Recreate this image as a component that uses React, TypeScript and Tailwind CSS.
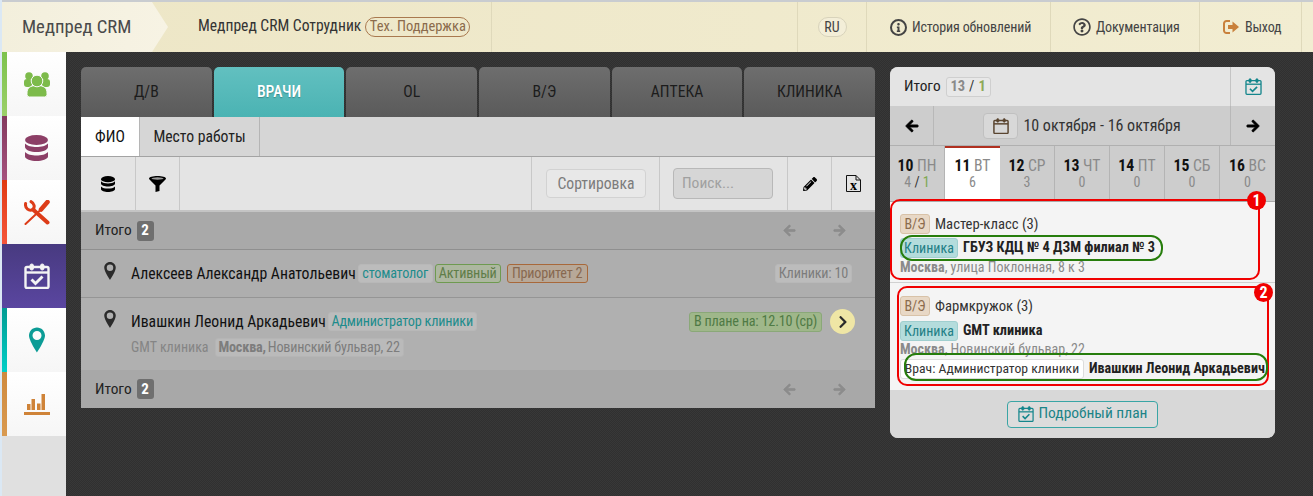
import React from "react";
import { FaPencilAlt, FaArrowLeft, FaArrowRight, FaRegQuestionCircle, FaInfo, FaChevronRight } from "react-icons/fa";

const font = "font-['Roboto_Condensed','Liberation_Sans_Narrow',Roboto,sans-serif] [font-stretch:condensed]";

function UsersIcon() {
  return (
    <svg width="26" height="25" viewBox="0 0 26 25" className="text-[#7dbb4b]" fill="currentColor">
      <circle cx="5" cy="4" r="3.800" />
      <circle cx="21" cy="4" r="3.800" />
      <rect x="0" y="7" width="8" height="8" rx="3" />
      <rect x="18" y="7" width="8" height="8" rx="3" />
      <path d="M3 21c0-5 3-7.500 10-7.500S23 16 23 21v1.500a2.500 2.500 0 0 1-2.500 2.500h-15A2.500 2.500 0 0 1 3 22.500Z" stroke="#f8f8f8" strokeWidth="1" />
      <circle cx="13" cy="9" r="5.800" stroke="#f8f8f8" strokeWidth="1" />
    </svg>
  );
}

function DbIcon({ className, w, h }: { className: string; w: number; h: number }) {
  return (
    <svg width={w} height={h} viewBox="0 0 23 26" fill="currentColor" className={className}>
      <ellipse cx="11.500" cy="5" rx="11.500" ry="5" />
      <path d="M0 8.500C2 11 7 12 11.500 12S21 11 23 8.500V12C23 15 17 17 11.500 17S0 15 0 12Z" />
      <path d="M0 17C2 19.500 7 20.500 11.500 20.500S21 19.500 23 17v4.500C23 24 17 26 11.500 26S0 24 0 21.500Z" />
    </svg>
  );
}

function ToolsIcon() {
  return (
    <svg width="26" height="25" viewBox="0 0 26 25" fill="none" stroke="#dd3c18" strokeLinecap="round">
      <path d="M1.600 3.500C.8 8.500 5 11.500 9 9.500C11 7 10.500 3.500 7 1.600" strokeWidth="3" />
      <path d="M9 9.500L23.500 22.500" strokeWidth="4" />
      <path d="M23.500 2L17 9.500" strokeWidth="4.500" />
      <path d="M17 9.500L1.500 24" strokeWidth="2" />
    </svg>
  );
}

function CalIcon({ size, className, check = true, sw = 2 }: { size: number; className: string; check?: boolean; sw?: number }) {
  return (
    <svg width={size} height={size} viewBox="0 0 26 26" fill="none" stroke="currentColor" strokeWidth={sw} className={className}>
      <rect x="1.500" y="4" width="23" height="21" rx="1.500" />
      <path d="M1.500 9.500H24.500" />
      <rect x="6" y="1" width="3.500" height="6" rx="1.700" fill="currentColor" strokeWidth="1" />
      <rect x="16.500" y="1" width="3.500" height="6" rx="1.700" fill="currentColor" strokeWidth="1" />
      {check && <path d="M7.500 16.500L11.500 20.500L18.500 13.500" strokeWidth={sw + 0.5} />}
    </svg>
  );
}

function PinIcon({ w, h, color }: { w: number; h: number; color: string }) {
  return (
    <svg width={w} height={h} viewBox="0 0 16 25" className={color} fill="currentColor">
      <path fillRule="evenodd" d="M8 0C3.600 0 0 3.600 0 8C0 13 8 25 8 25S16 13 16 8C16 3.600 12.400 0 8 0ZM8 3.500a4.500 4.500 0 1 1 0 9a4.500 4.500 0 0 1 0-9Z" />
    </svg>
  );
}

function ChartIcon() {
  return (
    <svg width="26" height="21" viewBox="0 0 26 21" fill="#cf8338">
      <rect x="3" y="10" width="3.500" height="6" />
      <rect x="7.500" y="5" width="3.500" height="11" />
      <rect x="13" y="9.500" width="3.500" height="6.500" />
      <rect x="17.500" y="0" width="3.500" height="16" />
      <rect x="0" y="18" width="26" height="3" />
    </svg>
  );
}

function FunnelIcon() {
  return (
    <svg width="17" height="16" viewBox="0 0 17 16" fill="#000">
      <path d="M0 2.500C0 1 4 0 8.500 0S17 1 17 2.500c0 .6-.4 1-1 1.500L10.500 9.500V15L6.500 16V9.500L1 4C.4 3.500 0 3.100 0 2.500Z" />
      <ellipse cx="8.500" cy="2.500" rx="6" ry="1.200" fill="#9a9a9a" />
    </svg>
  );
}

function ExcelIcon() {
  return (
    <svg width="15" height="17" viewBox="0 0 15 17" fill="none">
      <path d="M.5.500H10L14.500 5V16.500H.5Z M10 .5V5H14.500" stroke="#111" />
      <text x="7.500" y="14.500" textAnchor="middle" fontSize="14" fontWeight="700" fontFamily="'Liberation Serif',serif" fill="#000" stroke="none">x</text>
    </svg>
  );
}

function ExitIcon() {
  return (
    <svg width="16" height="16" viewBox="0 0 16 16" fill="none" className="text-[#c9813c]">
      <path d="M7 2H3.500A2.500 2.500 0 0 0 1 4.500V11.500A2.500 2.500 0 0 0 3.500 14H7" stroke="currentColor" strokeWidth="2" />
      <path d="M5 6H9.500V2.500L16 8L9.500 13.500V10H5Z" fill="currentColor" />
    </svg>
  );
}

function NavItem({ border, bg, children }: { border: string; bg: string; children: React.ReactNode }) {
  return (
    <div className={`h-16 flex ${bg}`}>
      <div className={`w-[5px] bg-gradient-to-b ${border}`} />
      <div className="flex-1 flex items-center justify-center">{children}</div>
    </div>
  );
}

function Pill({ className = "", size = "text-[14.200px] tracking-[-0.2px]", children }: { className?: string; size?: string; children: React.ReactNode }) {
  return <span className={`inline-flex items-center px-1 rounded-[3px] border leading-none whitespace-nowrap ${size} ${className}`}>{children}</span>;
}

function Pager() {
  return (
    <div className="ml-auto flex items-center gap-[37px] pr-[29px] text-[#8c8c8c] text-[13px]">
      <FaArrowLeft className="stroke-current stroke-[25]" /><FaArrowRight className="stroke-current stroke-[25]" />
    </div>
  );
}

function Total({ bar }: { bar: string }) {
  return (
    <div className={`h-[38px] flex items-center pl-[14px] ${bar}`}>
      <span className="text-[15.300px] text-[#222]">Итого</span>
      <span className="ml-[5px] w-[17px] h-5 rounded-[3px] bg-[#6f6f6f] text-white text-[15px] font-bold flex items-center justify-center">2</span>
      <Pager />
    </div>
  );
}

const days = [
  ["10", "ПН", "4"], ["11", "ВТ", "6"], ["12", "СР", "3"], ["13", "ЧТ", "0"], ["14", "ПТ", "0"], ["15", "СБ", "0"], ["16", "ВС", "0"],
];

const light = "bg-gradient-to-b from-white to-[#f6f6f6]";
const plain = "text-[14px]";

export default function App() {
  return (
    <div className={`${font} w-[1313px] h-[496px] overflow-hidden flex flex-col border-l-2 border-[#dbe8f4] bg-[#343434] text-[#222]`}>
      <header className="h-[52px] shrink-0 flex border-t-2 border-[#c9ccd0] bg-gradient-to-r from-[#ede6c6] to-[#f2edd2]">
        <div className="w-[166px] flex items-center pl-5 bg-gradient-to-r from-[#f3efdc] to-[#f7f3e4] text-[18.700px] text-[#4a4a4a] [clip-path:polygon(0_0,150px_0,100%_50%,150px_100%,0_100%)]">Медпред CRM</div>
        <div className="flex items-center ml-[30px] w-[293px] text-[15.600px] text-[#333]">
          Медпред CRM Сотрудник
          <span className="ml-1 h-5 w-[105px] flex items-center justify-center rounded-full border border-[#a9794f] text-[#8b6b4c] text-[14.500px]">Тех. Поддержка</span>
        </div>
        <div className="flex-1 border-l border-[#dfd9bb]" />
        <div className="w-[69px] flex items-center justify-center border-l border-[#dfd9bb]">
          <span className="h-5 w-[29px] flex items-center justify-center rounded-full border border-[#d8d3bb] bg-[#f3eed8] text-[14px] text-[#444]">RU</span>
        </div>
        <div className="w-[184px] flex items-center pl-[23px] border-l border-[#dfd9bb] text-[14px] tracking-[-0.15px] text-[#444] gap-[5px] whitespace-nowrap">
          <span className="w-[17px] h-[17px] rounded-full border-2 border-[#444] flex items-center justify-center text-[9px]"><FaInfo /></span>История обновлений
        </div>
        <div className="w-[149px] flex items-center pl-[22px] border-l border-[#dfd9bb] text-[14px] tracking-[-0.15px] text-[#444] gap-[5px]">
          <FaRegQuestionCircle className="text-[18px]" />Документация
        </div>
        <div className="w-[102px] flex items-center pl-[23px] border-l border-[#dfd9bb] text-[14px] tracking-[-0.15px] text-[#444] gap-[6px]">
          <ExitIcon />Выход
        </div>
        <div className="w-[12px] border-l border-[#dfd9bb]" />
      </header>
      <div className="flex-1 flex min-h-0 bg-[conic-gradient(#303030_25%,#383838_0_50%,#303030_0_75%,#383838_0)] bg-[length:2px_2px]">
        <aside className="w-[64px] shrink-0 bg-[#e0e0e0]">
          <NavItem border="from-[#7cc24c] to-[#9bd06a]" bg={light}><UsersIcon /></NavItem>
          <NavItem border="from-[#833a5f] to-[#a5527e]" bg={light}><DbIcon w={23} h={26} className="text-[#8c3f66]" /></NavItem>
          <NavItem border="from-[#e03a10] to-[#f5553a]" bg={light}><ToolsIcon /></NavItem>
          <NavItem border="from-[#483a80] to-[#5a46a0]" bg="bg-gradient-to-b from-[#483a80] to-[#5a46a0]"><CalIcon size={26} sw={2.400} className="text-[#f4f4f4]" /></NavItem>
          <NavItem border="from-[#009b93] to-[#00cfc7]" bg={light}><PinIcon w={16} h={26} color="text-[#0c9c96]" /></NavItem>
          <NavItem border="from-[#cf8a3e] to-[#d99a50]" bg={light}><ChartIcon /></NavItem>
        </aside>
        <main className="flex-1 flex gap-[15px] pl-[15px] pt-[15px] items-start">
          <section className="w-[794px]">
            <div className="grid grid-cols-6 gap-[2px] h-[50px]">
              {["Д/В", "ВРАЧИ", "OL", "В/Э", "АПТЕКА", "КЛИНИКА"].map((t) => (
                <div key={t} className={t === "ВРАЧИ"
                  ? "rounded-t-[5px] flex items-center justify-center text-[15.700px] font-medium text-white [text-shadow:0_1px_1px_#3a8a8a] bg-gradient-to-b from-[#62c0c0] to-[#4ab3b3]"
                  : "rounded-t-[5px] flex items-center justify-center text-[15.700px] text-[#1c1c1c] bg-gradient-to-b from-[#6e6e6e] to-[#5a5a5a]"}>{t}</div>
              ))}
            </div>
            <div className="h-10 flex bg-[#d6d6d6] border-b border-[#a3a3a3] text-[15.700px]">
              <div className="w-[58px] bg-white flex items-center justify-center text-[#111]">ФИО</div>
              <div className="w-[121px] flex items-center justify-center border-l border-r border-[#b5b5b5] text-[#222]">Место работы</div>
            </div>
            <div className="h-[55px] flex bg-[#e4e4e4] border-b-2 border-[#c4c4c4]">
              <div className="w-[55px] flex items-center justify-center border-r border-[#c8c8c8]"><DbIcon w={14} h={16} className="text-black" /></div>
              <div className="w-[44px] flex items-center justify-center border-r border-[#c8c8c8]"><FunnelIcon /></div>
              <div className="flex-1 border-r border-[#c8c8c8]" />
              <div className="w-[128px] flex items-center pl-[14px] border-r border-[#c8c8c8]">
                <span className="w-[100px] h-[29px] rounded-[4px] border border-[#d2d2d2] bg-[#e8e8e8] flex items-center justify-center text-[15.700px] text-[#7c7c7c]">Сортировка</span>
              </div>
              <div className="w-[128px] flex items-center pl-[13px] border-r border-[#c8c8c8]">
                <span className="w-[100px] h-[31px] rounded-[4px] border border-[#b8b8b8] bg-[#d6d6d6] flex items-center pl-2 text-[15.500px] text-[#a0a0a0]">Поиск...</span>
              </div>
              <div className="w-[44px] flex items-center justify-center border-r border-[#c8c8c8] text-[14px] text-black"><FaPencilAlt /></div>
              <div className="w-[43px] flex items-center justify-center"><ExcelIcon /></div>
            </div>
            <Total bar="bg-[#a9a9a9] border-b border-[#8f8f8f]" />
            <div className="h-12 flex items-center bg-[#aeaeae] border-b border-[#959595] pl-[23px] pr-[23px]">
              <span className="self-start mt-[12px]"><PinIcon w={12} h={18} color="text-[#2b2b2b]" /></span>
              <span className="ml-[15px] text-[15.700px] text-[#111] whitespace-nowrap">Алексеев Александр Анатольевич</span>
              <Pill className="ml-[2px] h-[19px] w-[75px] justify-center bg-[#bcbcbc] border-[#b8b8b8] text-[#1e8c8c]">стоматолог</Pill>
              <Pill className="ml-[2px] h-[19px] w-[66px] justify-center bg-[#adb7a0] border-[#6e9a50] text-[#5f7d48]">Активный</Pill>
              <Pill className="ml-[6px] h-[19px] w-[81px] justify-center bg-[#b7a898] border-[#a8683a] text-[#886850]">Приоритет 2</Pill>
              <Pill className="ml-auto h-[19px] w-[77px] justify-center bg-[#bcbcbc] border-[#b8b8b8] text-[#7c7c7c]">Клиники: 10</Pill>
            </div>
            <div className="h-[72px] flex bg-[#b0b0b0] pl-[23px] pr-[20px] pt-[11px]">
              <span className="mt-[1px]"><PinIcon w={12} h={18} color="text-[#2b2b2b]" /></span>
              <div className="ml-[15px] flex-1">
                <div className="flex items-center h-[25px]">
                  <span className="text-[15.700px] text-[#111] whitespace-nowrap">Ивашкин Леонид Аркадьевич</span>
                  <Pill className="ml-[2px] h-[19px] w-[149px] justify-center bg-[#bcbcbc] border-[#b8b8b8] text-[#1e8c8c]">Администратор клиники</Pill>
                  <Pill className="ml-auto h-5 w-[133px] justify-center bg-[#9fb78a] border-[#8aa878] text-[#4f7a45]">В плане на: 12.10 (ср)</Pill>
                  <span className="ml-2 w-[25px] h-[25px] rounded-full bg-[#efe6a5] flex items-center justify-center text-[14px] text-[#2a2a2a]"><FaChevronRight /></span>
                </div>
                <div className="flex items-center mt-[3px] text-[14px] text-[#858585]">
                  <span>GMT клиника</span>
                  <Pill className="ml-[6px] h-[19px] w-[189px] justify-center bg-[#bababa] border-[#b5b5b5] text-[#7d7d7d]"><b className="mr-[2px]">Москва,</b> Новинский бульвар, 22</Pill>
                </div>
              </div>
            </div>
            <Total bar="bg-[#a8a8a8]" />
          </section>
          <section className="relative w-[385px] h-[371px] rounded-[8px] bg-[#d0d0d0] flex flex-col">
            <div className="h-[39px] flex items-center rounded-t-[8px] bg-[#e4e4e4]">
              <span className="ml-[14px] text-[15.300px] text-[#222]">Итого</span>
              <span className="ml-[5px] h-5 w-[45px] flex items-center justify-center gap-[4px] rounded-[3px] border border-[#cfcfcf] bg-[#e8e8e8] text-[14.500px] font-bold text-[#8a8a8a]">13 <span className="text-[#333] font-normal">/</span> <span className="text-[#8ea957]">1</span></span>
              <div className="ml-auto w-[45px] h-full border-l border-[#c4c4c4] flex items-center justify-center"><CalIcon size={17} className="text-[#14868c]" sw={2} /></div>
            </div>
            <div className="h-10 flex items-center bg-[#cdcdcd] border-b border-[#b0b0b0]">
              <div className="w-[44px] h-full flex items-center justify-center border-r border-[#b8b8b8] text-[14px] text-black"><FaArrowLeft className="stroke-current stroke-[30]" /></div>
              <div className="flex-1 flex items-center justify-center gap-[5px] text-[16px] text-[#333]">
                <span className="w-[35px] h-[26px] rounded-[4px] border border-[#c0c0c0] bg-[#d8d8d8] flex items-center justify-center"><CalIcon size={16} sw={2.400} check={false} className="text-[#5a4530]" /></span>
                10 октября - 16 октября
              </div>
              <div className="w-[45px] h-full flex items-center justify-center border-l border-[#b8b8b8] text-[14px] text-black"><FaArrowRight className="stroke-current stroke-[30]" /></div>
            </div>
            <div className="h-[56px] flex bg-[#cdcdcd] border-b border-[#aaaaaa]">
              {days.map(([d, w, n], i) => (
                <div key={d} className={i === 1
                  ? "w-[55px] bg-white border-t-2 border-[#b03020] text-center pt-[10px] leading-[16px]"
                  : "w-[55px] border-r border-[#b4b4b4] last:border-r-0 text-center pt-3 leading-[16px]"}>
                  <div className="text-[15.700px]"><b className="text-[#111]">{d}</b> <span className="text-[#8a8a8a]">{w}</span></div>
                  <div className="text-[14px] text-[#8a8a8a]">{n}{i === 0 && <><span className="text-[#333]"> / </span><span className="text-[#7fa850]">1</span></>}</div>
                </div>
              ))}
            </div>
            <div className="h-[188px] bg-[#f4f4f4] text-[14px]">
              <div className="h-[81px] border-b border-[#d0d0d0] pl-[10px] pt-[12px]">
                <div className="flex items-center h-5">
                  <Pill size={plain} className="h-5 w-[30px] justify-center bg-[#e8d8c6] border-[#d8c2a8] text-[#8b6b4c]">В/Э</Pill>
                  <span className="ml-[5px] text-[14.700px] text-[#333]">Мастер-класс (3)</span>
                </div>
                <div className="flex items-center h-5 mt-1">
                  <Pill size={plain} className="h-5 w-[58px] justify-center bg-[#b4dcdc] border-[#a0cfcf] text-[#227f85]">Клиника</Pill>
                  <b className="ml-[5px] text-[14.300px] text-[#222]">ГБУЗ КДЦ № 4 ДЗМ филиал № 3</b>
                </div>
                <div className="text-[#8a8a8a] leading-[16px] mt-[1px]"><b>Москва</b>, улица Поклонная, 8 к 3</div>
              </div>
              <div className="pl-[10px] pt-[13px]">
                <div className="flex items-center h-5">
                  <Pill size={plain} className="h-5 w-[30px] justify-center bg-[#e8d8c6] border-[#d8c2a8] text-[#8b6b4c]">В/Э</Pill>
                  <span className="ml-[5px] text-[14.700px] text-[#333]">Фармкружок (3)</span>
                </div>
                <div className="flex items-center h-5 mt-[5px]">
                  <Pill size={plain} className="h-5 w-[58px] justify-center bg-[#b4dcdc] border-[#a0cfcf] text-[#227f85]">Клиника</Pill>
                  <b className="ml-[5px] text-[14.300px] text-[#222]">GMT клиника</b>
                </div>
                <div className="text-[#8a8a8a] leading-[16px]"><b>Москва</b>, Новинский бульвар, 22</div>
                <div className="flex items-center h-5 mt-[2px]">
                  <Pill size="text-[13.700px]" className="h-5 w-[184px] justify-center bg-white border-[#dcdcdc] text-[#333]">Врач: Администратор клиники</Pill>
                  <b className="ml-[5px] text-[14.100px] text-[#222] whitespace-nowrap">Ивашкин Леонид Аркадьевич</b>
                </div>
              </div>
            </div>
            <div className="flex-1 rounded-b-[8px] bg-[#d8d8d8] flex items-center justify-center">
              <span className="h-[27px] w-[151px] rounded-[4px] border border-[#3aa5a5] bg-[#dcdcdc] flex items-center justify-center gap-[5px] text-[15.500px] text-[#1d8488]"><CalIcon size={16} className="text-[#14868c]" />Подробный план</span>
            </div>
            <div className="absolute left-0 top-[132px] w-[370px] h-[81px] rounded-[10px] border-2 border-[#f00000]" />
            <div className="absolute left-[357px] top-[124px] w-[19px] h-[19px] rounded-full bg-[#f00000] text-white text-[16px] font-bold flex items-center justify-center">1</div>
            <div className="absolute left-[7px] top-[219px] w-[372px] h-[100px] rounded-[10px] border-2 border-[#f00000]" />
            <div className="absolute left-[364px] top-[216px] w-[19px] h-[19px] rounded-full bg-[#f00000] text-white text-[16px] font-bold flex items-center justify-center">2</div>
            <div className="absolute left-[10px] top-[168px] w-[263px] h-[26px] rounded-[12px] border-2 border-[#267d0c]" />
            <div className="absolute left-[14px] top-[286px] w-[364px] h-[28px] rounded-[12px] border-2 border-[#267d0c]" />
          </section>
        </main>
      </div>
    </div>
  );
}
